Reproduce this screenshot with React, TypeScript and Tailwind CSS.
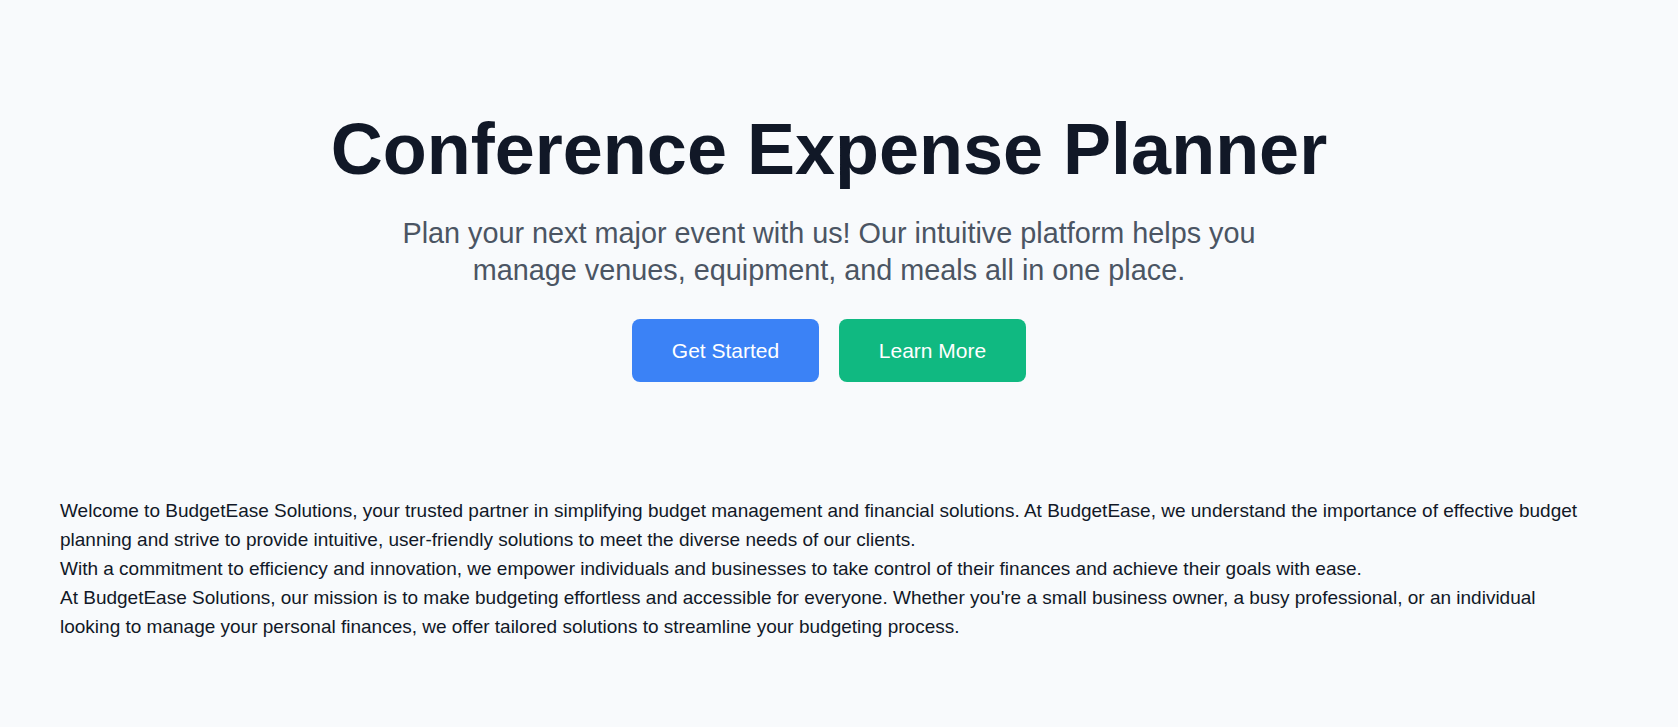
import React from 'react';

const INTRO = [
  'Welcome to BudgetEase Solutions, your trusted partner in simplifying budget management and financial solutions. At BudgetEase, we understand the importance of effective budget planning and strive to provide intuitive, user-friendly solutions to meet the diverse needs of our clients.',
  'With a commitment to efficiency and innovation, we empower individuals and businesses to take control of their finances and achieve their goals with ease.',
  "At BudgetEase Solutions, our mission is to make budgeting effortless and accessible for everyone. Whether you're a small business owner, a busy professional, or an individual looking to manage your personal finances, we offer tailored solutions to streamline your budgeting process.",
];

export default function App() {
  return (
    <div className="min-h-screen bg-[#f8fafc] font-['Liberation_Sans',Arial,sans-serif]">
      <main className="pr-[20px]">
        {/* hero */}
        <section className="flex flex-col items-center pt-[113px] text-center">
          <h1 className="text-[72px] font-bold leading-none text-[#111827]">Conference Expense Planner</h1>
          <p className="mt-[30px] max-w-[900px] text-[28.8px] leading-[37px] text-[#4b5563]">
            Plan your next major event with us! Our intuitive platform helps you manage venues, equipment, and meals all in one place.
          </p>
          <div className="mt-[30px] flex gap-[20px]">
            <button className="flex h-[63px] w-[187px] items-center justify-center rounded-lg bg-[#3b82f6] text-[21px] text-white">
              Get Started
            </button>
            <button className="flex h-[63px] w-[187px] items-center justify-center rounded-lg bg-[#10b981] text-[21px] text-white">
              Learn More
            </button>
          </div>
        </section>

        {/* about */}
        <section className="mt-[114px] px-[60px] text-[19px] leading-[29px] text-[#111827]">
          {INTRO.map((line) => (
            <p key={line}>{line}</p>
          ))}
        </section>
      </main>
    </div>
  );
}
